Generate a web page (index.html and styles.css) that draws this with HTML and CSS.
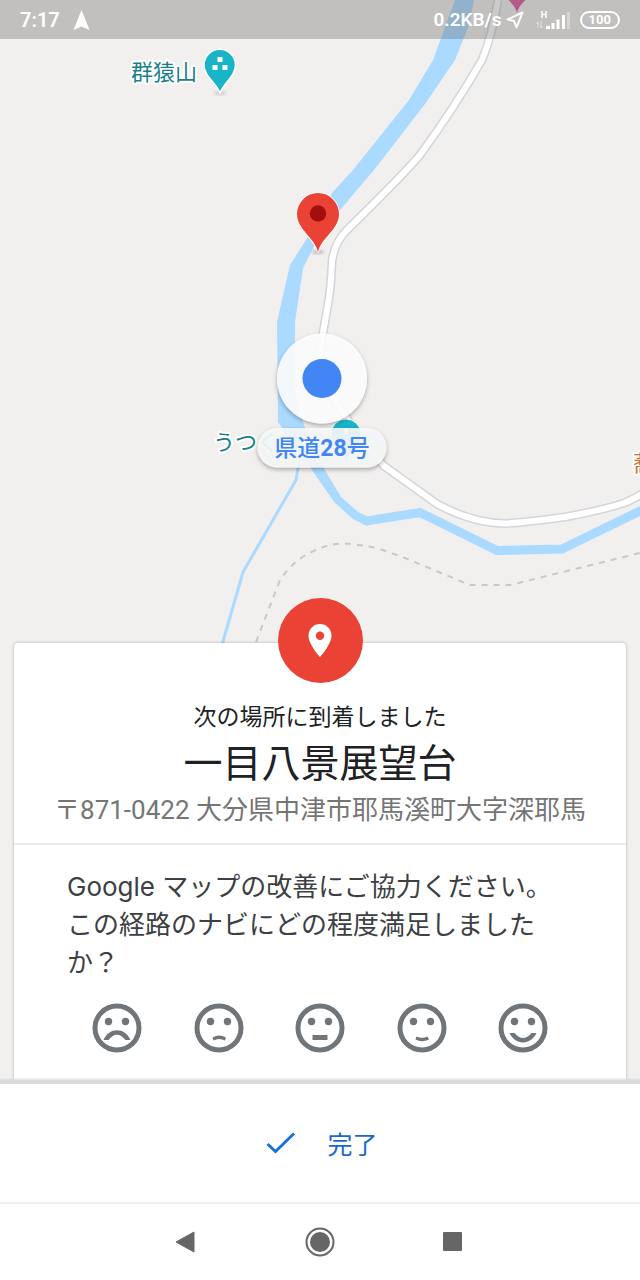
FILE: index.html
```html
<!DOCTYPE html>
<html lang="ja">
<head>
<meta charset="utf-8">
<meta name="viewport" content="width=device-width, initial-scale=1">
<title>一目八景展望台</title>
<link rel="stylesheet" href="styles.css">
</head>
<body>
<div class="screen">
  <svg class="map" viewBox="0 0 640 1084" preserveAspectRatio="xMidYMin slice" role="img" aria-label="地図">
    <defs>
      <filter id="soft" x="-20%" y="-20%" width="140%" height="150%">
        <feDropShadow dx="0" dy="2" stdDeviation="2" flood-color="#000" flood-opacity=".35"/>
      </filter>
      <filter id="blur"><feGaussianBlur stdDeviation="1.5"/></filter>
    </defs>
    <path class="river" d="M455 0 433 60 409 100 353 170 332 193 306 240 290 265 277 322 278 422 310 467 334 502 353 519 367 526 367 516 358 512 341 497 323 467 304 425 295 392 295 322 303 268 320 235 340 210 374 170 425 104 455 60 469 25 474 0Z"/>
    <path class="stream wide" d="M364 520 367 521 420 512.500 497 550.500 562 549 645 508.500"/>
    <path class="stream" d="M299 462 296 480 243 572 222 645"/>
    <path class="trail" d="M256 642 280 580Q290 565 304 556 325 544 342 543.500 360 544 380 549L405 558 470 585H510L640 553"/>
    <path class="road-edge" d="M498 0Q492 36 482 60 455 107 420 155 405 173 347 230 334 243 332 262 331 290 327 310L320 350Q320 385 345 415 358 438 384 466L437 504Q472 523 505 523.500 520 523 565 517 603 510 624 503 632 500 645 492"/>
    <path class="road-fill" d="M498 0Q492 36 482 60 455 107 420 155 405 173 347 230 334 243 332 262 331 290 327 310L320 350Q320 385 345 415 358 438 384 466L437 504Q472 523 505 523.500 520 523 565 517 603 510 624 503 632 500 645 492"/>

    <text class="place" x="131" y="80">群猿山</text>
    <ellipse cx="220" cy="93" rx="6" ry="2" fill="#999" filter="url(#blur)" opacity=".4"/>
    <path d="M220 93.500C218 84 204 77 204 65A15.500 15.500 0 0 1 235.500 65C235.500 77 222 84 220 93.500Z" fill="#18b4c7" stroke="#fff" stroke-width="1.500"/>
    <path d="M217.500 57h5v5h-5zM212.500 65h5v5h-5zM222.500 65h5v5h-5z" fill="#fff"/>

    <ellipse cx="318" cy="252" rx="6" ry="2" fill="#888" filter="url(#blur)" opacity=".5"/>
    <path d="M318 252.500C315 238 297 230 297 214A21 21 0 0 1 339 214C339 230 321 238 318 252.500Z" fill="#fff" stroke="#fff" stroke-width="1.500"/>
    <path d="M318 252.500C315.500 238 297 230 297 214A21 21 0 0 1 339 214C339 230 320.500 238 318 252.500Z" fill="#ea4335"/>
    <circle cx="318" cy="213.500" r="8.200" fill="#a50e0e"/>

    <path d="M517 13C515 4 507 0 504-6H530C527 0 519 4 517 13Z" fill="#e0529f"/>
    <text class="place food" x="633" y="471">蕎</text>

    <text class="place" x="213" y="450">うつく</text>
    <path d="M346 464C343 450 331 446 331 434A15 15 0 0 1 361 434C361 446 349 450 346 464Z" fill="#18b4c7" stroke="#fff"/>
    <path d="M344 428h4v6h-4z" fill="#fff"/>

    <circle cx="322" cy="378.500" r="45" fill="#fff" fill-opacity=".88" filter="url(#soft)"/>
    <circle cx="322" cy="378.500" r="19.500" fill="#4285f4"/>
    <rect x="257.500" y="428" width="129" height="39.500" rx="19.750" fill="#f7f8f9" fill-opacity=".9" filter="url(#soft)"/>
    <text class="street" x="322" y="456" text-anchor="middle">県道<tspan class="number">28</tspan>号</text>
  </svg>

  <header class="status">
    <div class="group">
      <span>7:17</span>
      <svg width="17" height="20" viewBox="0 0 17 20"><path d="M8.500 0 16.500 20 8.500 16.500 .5 20Z" fill="#fff"/></svg>
    </div>
    <div class="group right">
      <span class="speed">0.2KB/s</span>
      <svg class="arrow" width="18" height="18" viewBox="0 0 18 18" fill="none" stroke="#fff" stroke-width="2" stroke-linejoin="round"><path d="M1.500 8.500 16.500 1.500 10.500 16.500 8 10Z"/></svg>
      <svg class="signal" width="34" height="20" viewBox="0 0 34 20">
        <path d="M2 12v6M0.500 14 2 12M5 11v7M5 18 6.500 16" stroke="#fff" stroke-opacity=".55" fill="none"/>
        <path d="M6 1v7M10 1v7M6 4.500h4" stroke="#fff" stroke-width="1.500" fill="none"/>
        <path d="M10 16.500 14 15.500V19H10ZM15.500 13h3v6h-3zM20.500 9.500h3V19h-3zM26 5h3v14h-3z" fill="#fff"/>
        <path d="M31 2h3v17h-3z" fill="#fff" fill-opacity=".35"/>
      </svg>
      <span class="battery">100</span>
    </div>
  </header>

  <main class="content">
    <section class="card">
      <div class="badge">
        <svg width="24" height="34" viewBox="0 0 24 34"><path fill="#fff" fill-rule="evenodd" d="M12 0A11.500 11.500 0 0 0 .5 11.700C.5 20.500 12 33 12 33S23.500 20.500 23.500 11.700A11.500 11.500 0 0 0 12 0ZM12 7.500a4.200 4.200 0 1 1 0 8.400 4.200 4.200 0 0 1 0-8.400Z"/></svg>
      </div>
      <div class="arrival">
        <p class="lead">次の場所に到着しました</p>
        <h1 class="title">一目八景展望台</h1>
        <p class="address">〒871-0422 大分県中津市耶馬溪町大字深耶馬</p>
      </div>
      <div class="survey">
        <p class="question">Google マップの改善にご協力ください。この経路のナビにどの程度満足しましたか？</p>
        <div class="faces">
          <button class="face" type="button" aria-label="とても不満"><svg viewBox="0 0 50 50"><circle class="ring" cx="25" cy="25" r="22"/><circle cx="16.500" cy="18.500" r="3.700"/><circle cx="33.500" cy="18.500" r="3.700"/><path d="M11.500 37C17 24 33 24 38.500 37H33.500Q25 26.500 16.500 37Z"/></svg></button>
          <button class="face" type="button" aria-label="不満"><svg viewBox="0 0 50 50"><circle class="ring" cx="25" cy="25" r="22"/><circle cx="16.500" cy="18.500" r="3.700"/><circle cx="33.500" cy="18.500" r="3.700"/><path d="M18.500 34.500Q25 30.500 32 34.500L31 37.500Q25 34.500 19.500 37.500Z"/></svg></button>
          <button class="face" type="button" aria-label="普通"><svg viewBox="0 0 50 50"><circle class="ring" cx="25" cy="25" r="22"/><circle cx="16.500" cy="18.500" r="3.700"/><circle cx="33.500" cy="18.500" r="3.700"/><path d="M17.500 32h15v5h-15z"/></svg></button>
          <button class="face" type="button" aria-label="満足"><svg viewBox="0 0 50 50"><circle class="ring" cx="25" cy="25" r="22"/><circle cx="16.500" cy="18.500" r="3.700"/><circle cx="33.500" cy="18.500" r="3.700"/><path d="M19.500 33.500Q25 36 30.500 33.500L32 36.500Q25 40 18.500 36.500Z"/></svg></button>
          <button class="face" type="button" aria-label="とても満足"><svg viewBox="0 0 50 50"><circle class="ring" cx="25" cy="25" r="22"/><circle cx="16.500" cy="18.500" r="3.700"/><circle cx="33.500" cy="18.500" r="3.700"/><path d="M11.500 30H16.500Q25 40 33.500 30H38.500C33 42.500 17 42.500 11.500 30Z"/></svg></button>
        </div>
      </div>
    </section>
  </main>

  <footer class="actions">
    <button class="done" type="button">
      <svg width="30" height="22" viewBox="0 0 30 22" fill="none" stroke="#1a6fd8" stroke-width="3"><path d="M1.500 12 9.500 19.500 28 1.500"/></svg>
      <span>完了</span>
    </button>
  </footer>

  <nav class="system" aria-label="システム">
    <button type="button" aria-label="戻る"><svg viewBox="0 0 30 30"><path d="M6 15 24 5V25Z" stroke="#666" stroke-linejoin="round" fill="#666"/></svg></button>
    <button type="button" aria-label="ホーム"><svg viewBox="0 0 30 30"><circle cx="15" cy="15" r="13.500" fill="none" stroke="#666" stroke-width="2"/><circle cx="15" cy="15" r="10" fill="#666"/></svg></button>
    <button type="button" aria-label="履歴"><svg viewBox="0 0 30 30"><rect x="3" y="5" width="19" height="19" rx="1" fill="#666"/></svg></button>
  </nav>
</div>
</body>
</html>
```
FILE: styles.css
```css
* {
  box-sizing: border-box;
}

body {
  margin: 0;
  font-family: Roboto, "Noto Sans CJK JP", sans-serif;
  background: #fff;
}

p,
h1 {
  margin: 0;
}

button {
  padding: 0;
  border: 0;
  background: none;
  font: inherit;
  color: inherit;
}

svg {
  display: block;
}

.screen {
  position: relative;
  display: flex;
  flex-direction: column;
  min-height: 100vh;
  overflow: hidden;
  background: #f1f0ee;
}

.map {
  position: absolute;
  top: 0;
  left: 0;
  width: 100%;
}

.river {
  fill: #aadaff;
}

.stream {
  fill: none;
  stroke: #aadaff;
  stroke-width: 3;
}

.stream.wide {
  stroke-width: 9;
}

.trail {
  fill: none;
  stroke: #c8c8c8;
  stroke-width: 2;
  stroke-dasharray: 6 6;
}

.road-edge {
  fill: none;
  stroke: #d3d5da;
  stroke-width: 9;
}

.road-fill {
  fill: none;
  stroke: #fff;
  stroke-width: 6;
}

.place {
  font-size: 22px;
  fill: #1a7f8b;
  stroke: #fff;
  stroke-width: 4px;
  stroke-linejoin: round;
  paint-order: stroke;
}

.place.food {
  fill: #c5703f;
}

.street {
  font-size: 23px;
  font-weight: 500;
  fill: #4285f4;
}

.number {
  font-weight: 700;
}

.status {
  position: relative;
  display: flex;
  align-items: center;
  justify-content: space-between;
  height: 39px;
  padding: 0 20px;
  background: rgba(100, 100, 100, 0.34);
  color: #fff;
  font-size: 20px;
  font-weight: 600;
}

.speed {
  font-size: 19px;
}

.group {
  display: flex;
  align-items: center;
  gap: 13px;
}

.group.right {
  gap: 4px;
}

.signal {
  margin-left: 8px;
}

.battery {
  margin-left: 6px;
  padding: 0 7px;
  border: 2px solid #fff;
  border-radius: 9px;
  font-size: 13px;
  font-weight: 700;
  line-height: 14px;
}

.content {
  position: relative;
  display: flex;
  flex: 1;
  flex-direction: column;
  justify-content: flex-end;
  padding: 0 14px;
}

.card {
  border-radius: 4px 4px 0 0;
  background: #fff;
  box-shadow: 0 0 3px rgba(0, 0, 0, 0.3);
}

.badge {
  display: flex;
  align-items: center;
  justify-content: center;
  width: 85px;
  height: 85px;
  margin: -45px auto 0;
  border-radius: 50%;
  background: #ea4335;
}

.arrival {
  padding: 18px 16px 16px;
  border-bottom: 2px solid #ebebeb;
  text-align: center;
}

.lead {
  color: #202124;
  font-size: 23px;
  line-height: 34px;
}

.title {
  margin: 5px 0;
  color: #202124;
  font-size: 39px;
  font-weight: 400;
  line-height: 48px;
}

.address {
  color: #757575;
  font-size: 26px;
  line-height: 34px;
}

.survey {
  padding: 23px 53px 31px;
}

.question {
  padding-right: 13px;
  color: #3c4043;
  font-family: Inter, "Noto Sans CJK JP", sans-serif;
  font-size: 26px;
  line-height: 38px;
}

.faces {
  display: flex;
  justify-content: space-between;
  margin-top: 21px;
  padding: 0 25px;
}

.face {
  width: 50px;
  height: 50px;
  fill: #70757a;
}

.ring {
  fill: none;
  stroke: #70757a;
  stroke-width: 5;
}

.actions {
  position: relative;
  display: flex;
  justify-content: center;
  border-bottom: 2px solid #efefef;
  background: #fff;
  box-shadow: 0 -4px 0 #dcdcdc, 0 -5px 2px #dcdcdc;
}

.done {
  display: flex;
  align-items: center;
  gap: 31px;
  height: 118px;
  padding: 0 14px 0 18px;
  color: #1967d2;
  font-size: 25px;
}

.system {
  position: relative;
  display: flex;
  align-items: center;
  justify-content: space-between;
  height: 76px;
  padding: 0 170px;
  background: #fff;
}

.system button {
  width: 30px;
  height: 30px;
}
```
